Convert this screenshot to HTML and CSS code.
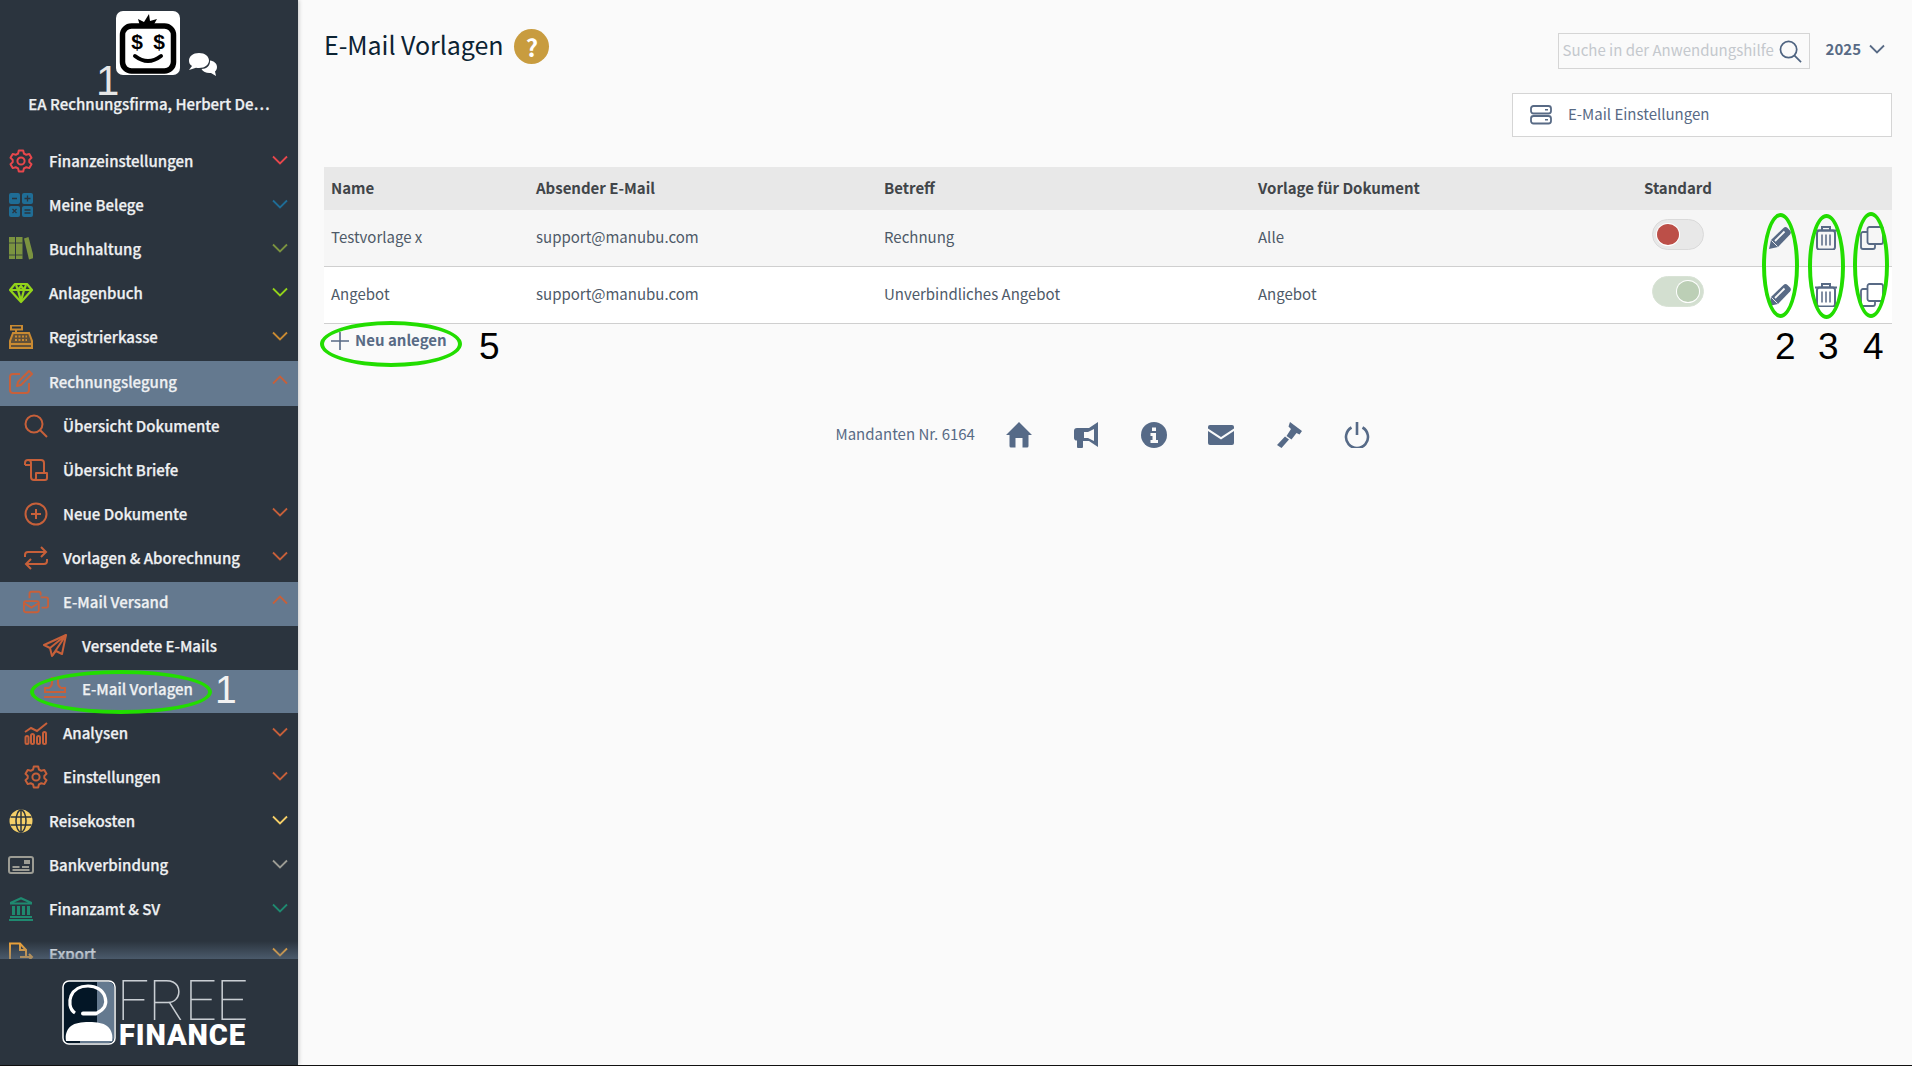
FILE: index.html
```html
<!DOCTYPE html>
<html lang="de">
<head>
<meta charset="utf-8">
<title>E-Mail Vorlagen</title>
<link rel="stylesheet" href="styles.css">
</head>
<body>
<svg class="sprite" aria-hidden="true">
  <defs>
    <symbol id="chev" viewBox="0 0 16 10"><path d="M1 1.500 8 8.500 15 1.500" fill="none" stroke="currentColor" stroke-width="1.800"/></symbol>
    <symbol id="chevup" viewBox="0 0 16 10"><path d="M1 8.500 8 1.500 15 8.500" fill="none" stroke="currentColor" stroke-width="1.800"/></symbol>
    <symbol id="gear" viewBox="0 0 24 24"><g fill="none" stroke="currentColor" stroke-width="2"><circle cx="12" cy="12" r="3.600"/><path d="M9.800 1.500h4.400l.7 3 2.400 1.300 3-.9 2.200 3.800-2.200 2.200v2.200l2.200 2.200-2.200 3.800-3-.9-2.400 1.300-.7 3H9.800l-.7-3-2.400-1.300-3 .9-2.200-3.800 2.200-2.200v-2.200L1.500 8.700l2.200-3.800 3 .9 2.400-1.300z" stroke-linejoin="round"/></g></symbol>
    <symbol id="pencil" viewBox="0 0 24 24"><path d="M1 23 3 14 15.500 2a3 3 0 0 1 4 0l2.500 2.500a3 3 0 0 1 0 4L10 21z" fill="currentColor"/><path d="M7 15 16.500 5.500" stroke="#fafafa" stroke-width="1.800" fill="none"/><path d="M3.500 14.500l6 6" stroke="#fafafa" stroke-width=".9" fill="none"/></symbol>
    <symbol id="trash" viewBox="0 0 24 24"><g fill="none" stroke="currentColor" stroke-width="2"><path d="M1 4.500h22"/><path d="M8 4.500V1h8v3.500"/><rect x="3" y="4.500" width="18" height="19" rx="2.500"/><path d="M8 8.500v11M12 8.500v11M16 8.500v11" stroke-width="1.500"/></g></symbol>
    <symbol id="copy" viewBox="0 0 24 24"><g fill="none" stroke="currentColor" stroke-width="1.800"><rect x="7.500" y="1" width="15.500" height="17" rx="2"/><path d="M7.500 6H3a2 2 0 0 0-2 2v13a2 2 0 0 0 2 2h10a2 2 0 0 0 2-2v-3"/></g></symbol>
  </defs>
</svg>

<div class="app">
  <aside class="sidebar">
    <div class="brand">
      <div class="avatar-row">
        <svg class="avatar" viewBox="0 0 64 64">
          <rect width="64" height="64" rx="7" fill="#fff"/>
          <path d="M24 15 22 8l6 3 5-8 1 7 7-2-4 7z" fill="#000"/>
          <rect x="6.500" y="15" width="51" height="45" rx="9" fill="none" stroke="#000" stroke-width="5.500"/>
          <text x="21" y="38" class="dollar">$</text>
          <text x="43" y="38" class="dollar">$</text>
          <path d="M19 45q13 10 26 0" fill="none" stroke="#000" stroke-width="4" stroke-linecap="round"/>
        </svg>
        <svg class="chat" viewBox="0 0 30 24">
          <path d="M11 0c6 0 10 3.500 10 7.500S17 15 11 15c-1 0-2 0-3-.3L1 17l3-4C1.500 11.500 1 9.500 1 7.500 1 3.500 5 0 11 0z" fill="#fff"/>
          <path d="M22 7.500c4 .5 7 3 7 6.500 0 2-1 3.500-2 4.500l1 4.500-5-3c-4 .5-8-1-9.500-4 5 0 9-3.500 8.500-8.500z" fill="#fff"/>
        </svg>
      </div>
      <div class="company">EA Rechnungsfirma, Herbert De…</div>
    </div>

    <nav class="nav">
      <a class="item c-red">
        <svg class="ico" viewBox="0 0 24 24"><use href="#gear"/></svg>
        <span class="label">Finanzeinstellungen</span><svg class="chevron"><use href="#chev"/></svg>
      </a>
      <a class="item c-blue">
        <svg class="ico" viewBox="0 0 24 24"><g fill="currentColor"><rect width="11" height="11" rx="2" x="0" y="0"/><rect width="11" height="11" rx="2" x="13" y="0"/><rect width="11" height="11" rx="2" x="0" y="13"/><rect width="11" height="11" rx="2" x="13" y="13"/></g><path d="M3 5.500h5M15.500 5.500h6M18.500 2.500v6M3.500 16l4 4M7.500 16l-4 4M15.500 17h6M15.500 20h6" stroke="#2b343e" stroke-width="1.300"/></svg>
        <span class="label">Meine Belege</span><svg class="chevron"><use href="#chev"/></svg>
      </a>
      <a class="item c-green">
        <svg class="ico" viewBox="0 0 24 24"><g fill="currentColor"><rect x="0" y="0" width="6" height="22"/><rect x="7" y="0" width="6.500" height="22"/><path d="M15 1.500 19.500 0 25 21l-5 1.500z"/></g><path d="M0 6h13.500M0 18h13.500" stroke="#2b343e" stroke-width=".8"/></svg>
        <span class="label">Buchhaltung</span><svg class="chevron"><use href="#chev"/></svg>
      </a>
      <a class="item c-lime">
        <svg class="ico" viewBox="0 0 24 24"><g fill="none" stroke="currentColor" stroke-width="2.200" stroke-linejoin="round"><path d="M6 3h12l5 6-11 12L1 9z"/><path d="M1 9h22M7 4l2 5 3-4 3 4 2-5M9 9l3 11 3-11"/></g></svg>
        <span class="label">Anlagenbuch</span><svg class="chevron"><use href="#chev"/></svg>
      </a>
      <a class="item c-amber">
        <svg class="ico" viewBox="0 0 24 24"><g fill="none" stroke="currentColor" stroke-width="2"><rect x="2" y="0.500" width="11" height="4"/><path d="M7 4.500v3"/><path d="M4 8h16l3 8v7H1v-7z" fill="currentColor" fill-opacity=".35"/><path d="M1 19h22"/><path d="M6 11.500h12M6 15h12" stroke-dasharray="2 1.500"/></g></svg>
        <span class="label">Registrierkasse</span><svg class="chevron"><use href="#chev"/></svg>
      </a>

      <a class="item band c-rust">
        <svg class="ico" viewBox="0 0 24 24"><g fill="none" stroke="currentColor" stroke-width="2"><path d="M11 4H4a3 3 0 0 0-3 3v13a3 3 0 0 0 3 3h13a3 3 0 0 0 3-3v-7"/><path d="M8 16l1-4L20 1l3 3-11 11z" stroke-linejoin="round"/></g></svg>
        <span class="label">Rechnungslegung</span><svg class="chevron"><use href="#chevup"/></svg>
      </a>
      <a class="item sub c-rust">
        <svg class="ico" viewBox="0 0 24 24"><g fill="none" stroke="currentColor" stroke-width="2"><circle cx="10" cy="10" r="8.500"/><path d="M16 16l7 7"/></g></svg>
        <span class="label">Übersicht Dokumente</span>
      </a>
      <a class="item sub c-rust">
        <svg class="ico" viewBox="0 0 24 24"><g fill="none" stroke="currentColor" stroke-width="2" stroke-linejoin="round"><path d="M1 7V5a3 3 0 0 1 3-3h13a3 3 0 0 1 3 3v10"/><path d="M1 7h5M4 2a3 3 0 0 1 3 3v14a3 3 0 0 0 3 3h11a2 2 0 0 0 2-2v-5H12v5a2 2 0 0 1-2 2"/></g></svg>
        <span class="label">Übersicht Briefe</span>
      </a>
      <a class="item sub c-rust">
        <svg class="ico" viewBox="0 0 24 24"><g fill="none" stroke="currentColor" stroke-width="2"><circle cx="12" cy="12" r="10.500"/><path d="M12 7v10M7 12h10"/></g></svg>
        <span class="label">Neue Dokumente</span><svg class="chevron"><use href="#chev"/></svg>
      </a>
      <a class="item sub c-rust">
        <svg class="ico" viewBox="0 0 24 24"><g fill="none" stroke="currentColor" stroke-width="2"><path d="M1 11V9a3 3 0 0 1 3-3h18M17 1l5 5-5 5"/><path d="M23 13v2a3 3 0 0 1-3 3H2M7 13l-5 5 5 5"/></g></svg>
        <span class="label">Vorlagen &amp; Aborechnung</span><svg class="chevron"><use href="#chev"/></svg>
      </a>
      <a class="item band sub c-rust">
        <svg class="ico ico-wide" viewBox="0 0 28 24"><g fill="none" stroke="currentColor" stroke-width="2"><path d="M7 8V3a2 2 0 0 1 2-2h8a2 2 0 0 1 2 2v2"/><path d="M19 7h6a2 2 0 0 1 2 2v7a2 2 0 0 1-2 2h-5"/><rect x="1" y="11" width="16" height="12" rx="2"/><path d="M1 13l8 5 8-5"/></g></svg>
        <span class="label">E-Mail Versand</span><svg class="chevron"><use href="#chevup"/></svg>
      </a>
      <a class="item subsub c-rust">
        <svg class="ico" viewBox="0 0 24 24"><g fill="none" stroke="currentColor" stroke-width="2" stroke-linejoin="round"><path d="M23 1 1 11l6 3 2 8 4-5 6 3z"/><path d="M23 1 7 14M23 1 9 22"/></g></svg>
        <span class="label">Versendete E-Mails</span>
      </a>
      <a class="item band subsub c-rust">
        <svg class="ico" viewBox="0 0 24 24"><g fill="none" stroke="currentColor" stroke-width="2"><path d="M9 1h6v5c0 3 1.500 4 3 5h4v4H2v-4h4c1.500-1 3-2 3-5z"/><path d="M1 20h22"/></g></svg>
        <span class="label">E-Mail Vorlagen</span>
      </a>
      <a class="item sub c-rust">
        <svg class="ico" viewBox="0 0 24 24"><g fill="none" stroke="currentColor" stroke-width="2"><path d="M1 11l6-4 6 3 10-8"/><rect x="1.500" y="15" width="3" height="8" rx="1.500"/><rect x="7" y="13" width="3" height="10" rx="1.500"/><rect x="13" y="15" width="3" height="8" rx="1.500"/><rect x="19" y="11" width="3" height="12" rx="1.500"/></g></svg>
        <span class="label">Analysen</span><svg class="chevron"><use href="#chev"/></svg>
      </a>
      <a class="item sub c-rust">
        <svg class="ico" viewBox="0 0 24 24"><use href="#gear"/></svg>
        <span class="label">Einstellungen</span><svg class="chevron"><use href="#chev"/></svg>
      </a>
      <a class="item c-yellow">
        <svg class="ico" viewBox="0 0 24 24"><circle cx="12" cy="12" r="11.500" fill="currentColor"/><g fill="none" stroke="#2b343e" stroke-width="1.500"><ellipse cx="12" cy="12" rx="5" ry="11"/><path d="M12 1v22M1.500 8h21M1.500 16h21"/></g></svg>
        <span class="label">Reisekosten</span><svg class="chevron"><use href="#chev"/></svg>
      </a>
      <a class="item c-grey">
        <svg class="ico ico-wide" viewBox="0 0 26 18"><g fill="none" stroke="currentColor" stroke-width="2"><rect x="1" y="1" width="24" height="16" rx="2"/><path d="M4.500 11h7M4.500 14h17M14 11h7"/></g><rect x="16" y="4" width="6" height="4" fill="currentColor"/></svg>
        <span class="label">Bankverbindung</span><svg class="chevron"><use href="#chev"/></svg>
      </a>
      <a class="item c-teal">
        <svg class="ico" viewBox="0 0 24 24"><path d="M12 0 23 5v2.500H1V5z" fill="currentColor"/><path d="M12 2.500 19 5.500H5z" fill="#2b343e"/><g fill="currentColor"><rect x="3" y="9" width="3" height="9"/><rect x="8" y="9" width="3" height="9"/><rect x="13" y="9" width="3" height="9"/><rect x="18" y="9" width="3" height="9"/><rect x="1" y="19" width="22" height="2"/><rect y="22" width="24" height="2"/></g></svg>
        <span class="label">Finanzamt &amp; SV</span><svg class="chevron"><use href="#chev"/></svg>
      </a>
      <a class="item c-orange">
        <svg class="ico ico-wide" viewBox="0 0 26 24"><g fill="none" stroke="currentColor" stroke-width="2"><path d="M18 15V8l-6-6.500H2V23h16"/><path d="M12 1.500V8h6M12 15h12M21 12l3 3-3 3"/></g></svg>
        <span class="label">Export</span><svg class="chevron"><use href="#chev"/></svg>
      </a>
      <div class="nav-fade"></div>
    </nav>

    <div class="powered">
      <svg class="ff-icon" viewBox="0 0 54 65">
        <rect x="1" y="1" width="52" height="63" rx="6" fill="#031626" stroke="#fff" stroke-width="1.500"/>
        <path d="M35 2h12a5 5 0 0 1 5 5v51a5 5 0 0 1-5 5H18V44h17z" fill="#64798f"/>
        <path d="M13 33C7 29 7 21 9 16 12 9 19 6 26 6c8 0 15 4 17 11 2 6 0 12-8 16" fill="none" stroke="#fff" stroke-width="3.200"/>
        <path d="M21 33.500h13" stroke="#fff" stroke-width="4" stroke-linecap="round"/>
        <path d="M4 61c-1-5 0-11 5-15 4-3 10-4 18-4s14 1 18 4c5 4 6 10 5 15z" fill="#fff"/>
      </svg>
      <div class="wordmark">
        <span class="free">FREE</span>
        <span class="finance">FINANCE</span>
      </div>
    </div>
  </aside>

  <main class="main">
    <header class="top">
      <div class="title-wrap">
        <h1 class="title">E-Mail Vorlagen</h1>
        <span class="help">?</span>
      </div>
      <div class="tools">
        <div class="search">
          <span class="placeholder">Suche in der Anwendungshilfe</span>
          <svg class="search-ico" viewBox="0 0 24 24"><g fill="none" stroke="currentColor" stroke-width="1.800"><circle cx="10" cy="10" r="8.500"/><path d="M16 16l7 7"/></g></svg>
        </div>
        <div class="year">2025<svg class="year-chev"><use href="#chev"/></svg></div>
      </div>
    </header>

    <div class="settings-row">
      <button class="settings-btn">
        <svg class="settings-ico" viewBox="0 0 22 20"><g fill="none" stroke="currentColor" stroke-width="1.800"><rect x="1" y="1" width="20" height="7.500" rx="2.500"/><rect x="1" y="11" width="20" height="7.500" rx="2.500"/></g><path d="M15 4.800h3M15 14.800h3" stroke="currentColor" stroke-width="1.600"/></svg>
        <span class="settings-text">E-Mail Einstellungen</span>
      </button>
    </div>

    <section class="table">
      <div class="row head">
        <div class="cell">Name</div>
        <div class="cell">Absender E-Mail</div>
        <div class="cell">Betreff</div>
        <div class="cell">Vorlage für Dokument</div>
        <div class="cell">Standard</div>
        <div class="cell"></div>
      </div>
      <div class="row odd">
        <div class="cell">Testvorlage x</div>
        <div class="cell">support@manubu.com</div>
        <div class="cell">Rechnung</div>
        <div class="cell">Alle</div>
        <div class="cell toggle-cell"><span class="toggle off"><span class="knob"></span></span></div>
        <div class="cell actions">
          <svg class="act"><use href="#pencil"/></svg>
          <svg class="act"><use href="#trash"/></svg>
          <svg class="act"><use href="#copy"/></svg>
        </div>
      </div>
      <div class="row even">
        <div class="cell">Angebot</div>
        <div class="cell">support@manubu.com</div>
        <div class="cell">Unverbindliches Angebot</div>
        <div class="cell">Angebot</div>
        <div class="cell toggle-cell"><span class="toggle on"><span class="knob"></span></span></div>
        <div class="cell actions">
          <svg class="act"><use href="#pencil"/></svg>
          <svg class="act"><use href="#trash"/></svg>
          <svg class="act"><use href="#copy"/></svg>
        </div>
      </div>
    </section>

    <div class="add">
      <svg class="plus" viewBox="0 0 18 18"><path d="M9 0v18M0 9h18" stroke="currentColor" stroke-width="1.600"/></svg>
      <span class="add-text">Neu anlegen</span>
    </div>

    <footer class="foot">
      <span class="mandant">Mandanten Nr. 6164</span>
      <svg class="foot-ico" viewBox="0 0 26 26"><path d="M13 0 26 13h-3.500v11a1.500 1.500 0 0 1-1.500 1.500h-4.500V16h-7v9.500H5A1.500 1.500 0 0 1 3.500 24V13H0z" fill="currentColor"/></svg>
      <svg class="foot-ico" viewBox="0 0 26 26"><path d="M25 0v25l-9-6H10v6a1 1 0 0 1-1 1H5a1 1 0 0 1-1-1v-6.500A2.500 2.500 0 0 1 1 16V9a3 3 0 0 1 3-3h12zM21 7l-6 3H11v6h4l6 3z" fill="currentColor" fill-rule="evenodd"/></svg>
      <svg class="foot-ico" viewBox="0 0 26 26"><circle cx="13" cy="13" r="13" fill="currentColor"/><path d="M11 5.500h4v3.500h-4zM9.500 11h5.500v7h2v3H9.500v-3h2v-4h-2z" fill="#fafafa"/></svg>
      <svg class="foot-ico" viewBox="0 0 26 26"><path d="M2 3h22a2 2 0 0 1 2 2v1.500L13 15 0 6.500V5a2 2 0 0 1 2-2zM0 9l13 8.500L26 9v12a2 2 0 0 1-2 2H2a2 2 0 0 1-2-2z" fill="currentColor"/></svg>
      <svg class="foot-ico" viewBox="0 0 26 26"><path d="M14 0l12 9-2.500 3.500-3-1.500-5 6.500-5-3.500 4.500-7-2.500-2.500zM9 14.500l4 3L5.500 26 1 23z" fill="currentColor"/></svg>
      <svg class="foot-ico" viewBox="0 0 26 26"><g fill="none" stroke="currentColor" stroke-width="2.600"><path d="M7.500 5.500a11 11 0 1 0 11 0"/><path d="M13 0v13"/></g></svg>
    </footer>
  </main>
</div>

<div class="notes" aria-hidden="true">
  <span class="ring ring-side"></span>
  <span class="ring ring-add"></span>
  <span class="ring ring-edit"></span>
  <span class="ring ring-trash"></span>
  <span class="ring ring-copy"></span>
  <span class="num num-top">1</span>
  <span class="num num-side">1</span>
  <span class="num num-2">2</span>
  <span class="num num-3">3</span>
  <span class="num num-4">4</span>
  <span class="num num-5">5</span>
</div>
</body>
</html>
```

FILE: styles.css
```css
* { box-sizing: border-box; }
html, body { margin: 0; height: 100%; }
body {
  font-family: "Noto Sans CJK SC", "Noto Sans", sans-serif;
  font-size: 15px;
  color: #4a4f55;
  background: #fafafa;
  overflow: hidden;
}
.sprite { position: absolute; width: 0; height: 0; }

.app { display: flex; height: 1066px; border-bottom: 1px solid #111; }

/* Sidebar */
.sidebar {
  width: 298px;
  flex: none;
  display: flex;
  flex-direction: column;
  background: #2b343e;
  box-shadow: 1px 0 4px rgba(0, 0, 0, .2);
  z-index: 1;
}
.brand { height: 141px; padding-top: 11px; flex: none; }
.avatar-row { display: flex; align-items: flex-end; padding-left: 116px; height: 66px; }
.avatar { width: 64px; height: 64px; display: block; margin-bottom: 2px; }
.dollar { font: 700 21px "Liberation Sans", sans-serif; text-anchor: middle; fill: #000; }
.chat { width: 30px; height: 24px; margin-left: 8px; }
.company {
  margin-top: 16px;
  text-align: center;
  color: #eef0f2;
  font-size: 15px;
  line-height: 22px;
  font-weight: 500;
  -webkit-text-stroke: .25px #eef0f2;
}

.nav { flex: 1; min-height: 0; position: relative; overflow: hidden; }
.item {
  display: flex;
  align-items: center;
  height: 44.1px;
  padding: 0 10px 4px 9px;
}
.item .ico { width: 24px; height: 24px; flex: none; margin-right: 16px; }
.item .ico-wide { width: 26px; margin-left: -1px; margin-right: 15px; }
.item.sub { padding-left: 24px; }
.item.sub .ico { margin-right: 15px; }
.item.sub .ico-wide { margin-right: 14px; }
.item.subsub { padding-left: 43px; height: 43.5px; }
.item.subsub .ico { margin-right: 15px; }
.item.band { background: #64798f; }
.label {
  color: #eef0f2;
  font-weight: 500;
  font-size: 15px;
  line-height: 22px;
  -webkit-text-stroke: .25px #eef0f2;
}
.chevron { width: 16px; height: 10px; margin-left: auto; margin-top: -3px; }
.c-red { color: #e8474c; }
.c-blue { color: #1f6d96; }
.c-green { color: #7b9340; }
.c-lime { color: #93d31a; }
.c-amber { color: #c98a32; }
.c-rust { color: #c7603a; }
.c-yellow { color: #f5cf68; }
.c-grey { color: #9c9c94; }
.c-teal { color: #1f8a70; }
.c-orange { color: #f2a233; }
.nav-fade {
  position: absolute;
  left: 0; right: 0; bottom: 0;
  height: 18px;
  background: linear-gradient(rgba(100, 121, 143, 0), rgba(100, 121, 143, .55));
}

.powered {
  height: 106px;
  flex: none;
  display: flex;
  align-items: flex-start;
  gap: 1px;
  padding: 21px 0 0 62px;
}
.ff-icon { width: 54px; height: 65px; flex: none; }
.wordmark { display: flex; flex-direction: column; width: 132px; font-family: Roboto, sans-serif; color: #fff; }
.free { font-weight: 100; font-size: 56px; line-height: 43px; letter-spacing: -.5px; color: #c9ced3; }
.finance { font-weight: 900; font-size: 29px; line-height: 24px; letter-spacing: .9px; margin-left: 2px; }

/* Main */
.main { flex: 1; min-width: 0; padding: 0 20px 0 26px; color: #586a85; }
.top { height: 93px; display: flex; justify-content: space-between; align-items: flex-start; }
.title-wrap { display: flex; align-items: center; margin-top: 24px; }
.title { margin: 0; font-size: 25px; line-height: 36px; font-weight: 400; color: #0c2333; letter-spacing: -.05px; }
.help {
  width: 35px; height: 35px;
  margin: 5px 0 0 11px;
  border-radius: 50%;
  background: #c89c3f;
  color: #fff;
  font-weight: 700;
  font-size: 24px;
  line-height: 35px;
  text-align: center;
}
.tools { display: flex; align-items: center; margin-top: 33px; }
.search {
  width: 252px; height: 36px;
  display: flex; align-items: center; justify-content: space-between;
  padding: 0 7px 0 4px;
  border: 1px solid #d5d5d5;
  background: #fafafa;
}
.placeholder { color: #c4c8cd; font-size: 15px; line-height: 20px; white-space: nowrap; margin-bottom: 3px; }
.search-ico { width: 23px; height: 23px; color: #4f6481; flex: none; }
.year { margin: -4px 7px 0 16px; display: flex; align-items: center; gap: 8px; font-weight: 700; font-size: 15px; line-height: 20px; color: #586a85; }
.year-chev { width: 16px; height: 10px; }

.settings-row { display: flex; justify-content: flex-end; margin-bottom: 30px; }
.settings-btn {
  width: 380px; height: 44px;
  display: flex; align-items: center; gap: 16px;
  padding: 0 0 0 17px;
  border: 1px solid #d5d5d5;
  background: #fff;
  font: inherit;
  color: #586a85;
  text-align: left;
}
.settings-ico { width: 22px; height: 20px; flex: none; }
.settings-text { margin-bottom: 3px; }

.table { width: 100%; }
.row {
  display: grid;
  grid-template-columns: 205px 348px 374px 386px 83px 1fr;
  align-items: center;
  color: #4e5a68;
  line-height: 22px;
}
.cell { padding: 0 0 2px 7px; white-space: nowrap; }
.head { height: 43px; background: #e8e8e8; font-weight: 700; color: #414549; }
.odd { height: 57px; background: #f6f6f6; border-bottom: 1px solid #cfcfcf; }
.even { height: 57px; background: #fff; border-bottom: 1px solid #cfcfcf; }
.toggle-cell { padding: 0 0 0 15px; display: flex; }
.toggle {
  width: 52px; height: 31px;
  padding: 4px;
  margin-top: -8px;
  border-radius: 16px;
  display: flex;
  background: #e8e8e8;
  border: 1px solid #dadada;
}
.knob { width: 22px; height: 21px; border-radius: 50%; background: #bc4f48; box-shadow: 0 0 0 1px #fff; }
.toggle.on { background: #d3dfd0; border-color: #d9e3d6; justify-content: flex-end; }
.toggle.on .knob { background: #bccfb6; }
.actions { display: flex; gap: 22px; padding: 0 0 0 48px; height: 24px; }
.act { width: 24px; height: 24px; color: #586a85; }

.add {
  display: flex; align-items: center; gap: 6px;
  height: 34px;
  padding-left: 7px;
  font-weight: 700;
  color: #586a85;
}
.add-text { margin-bottom: 3px; }
.plus { width: 18px; height: 18px; flex: none; }

.foot {
  display: flex; align-items: center; justify-content: center;
  gap: 41.6px;
  margin-top: 59px;
  height: 36px;
  padding-right: 11px;
}
.mandant { margin: 0 -11px 3px 0; }
.foot-ico { width: 26px; height: 26px; flex: none; color: #566a87; }

/* Annotations drawn on top of the screenshot */
.notes { position: absolute; inset: 0; pointer-events: none; z-index: 5; font-family: "Liberation Sans", sans-serif; }
.ring { position: absolute; border: 4px solid #22dd00; border-radius: 50%; }
.ring-side { left: 30px; top: 670px; width: 182px; height: 44px; }
.ring-add { left: 320px; top: 321px; width: 142px; height: 46px; }
.ring-edit { left: 1762px; top: 213px; width: 37px; height: 105px; }
.ring-trash { left: 1808px; top: 214px; width: 37px; height: 105px; }
.ring-copy { left: 1853px; top: 212px; width: 36px; height: 106px; }
.num { position: absolute; font-size: 37px; line-height: 37px; color: #000; }
.num-top { left: 96px; top: 60px; font-size: 42px; line-height: 42px; color: #e6e6e6; }
.num-side { left: 215px; top: 670px; font-size: 39px; line-height: 39px; color: #f2f2f2; }
.num-2 { left: 1775px; top: 328px; }
.num-3 { left: 1818px; top: 328px; }
.num-4 { left: 1863px; top: 328px; }
.num-5 { left: 479px; top: 328px; }
```
